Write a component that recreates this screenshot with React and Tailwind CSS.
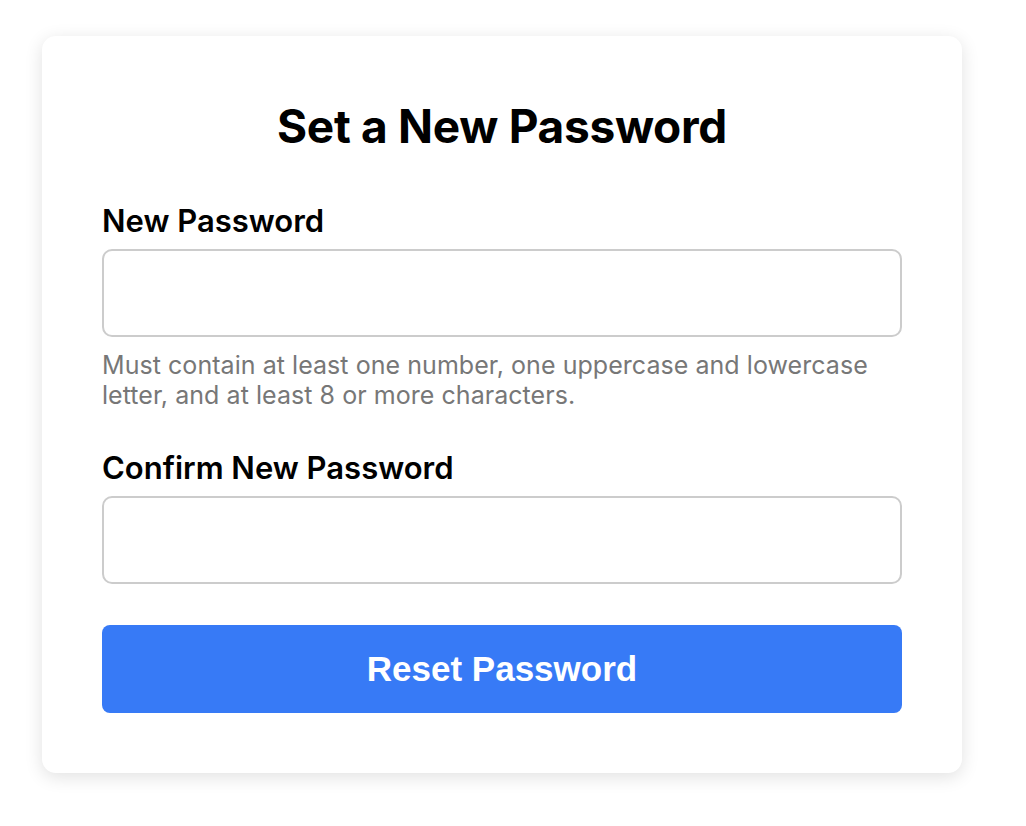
export default function App() {
  return (
    <div className="min-h-screen w-full bg-white pt-[36px] pl-[42px]" style={{ fontFamily: 'Inter, "Noto Sans", sans-serif' }}>
      <div className="w-[920px] rounded-[14px] bg-white px-[60px] pt-[60px] pb-[60px] shadow-[0_4px_18px_rgba(0,0,0,0.12)]">
        <h1 className="text-center text-[46px] font-bold leading-[60px] tracking-[-0.3px] text-black">Set a New Password</h1>
        <div className="mt-[45px]">
          <label className="block text-[31px] font-semibold leading-[40px] text-black">New Password</label>
          <input type="password" className="mt-[8px] block h-[88px] w-full rounded-[10px] border-2 border-[#cccccc] bg-white outline-none" />
          <p className="mt-[13px] text-[25px] leading-[30px] tracking-[0.05px] text-[#777777]">
            Must contain at least one number, one uppercase and lowercase letter, and at least 8 or more characters.
          </p>
        </div>
        <div className="mt-[38px]">
          <label className="block text-[31px] font-semibold leading-[40px] text-black">Confirm New Password</label>
          <input type="password" className="mt-[8px] block h-[88px] w-full rounded-[10px] border-2 border-[#cccccc] bg-white outline-none" />
        </div>
        <button className="mt-[41px] flex h-[88px] w-full items-center justify-center rounded-[8px] bg-[#377af6] text-[35px] font-bold text-white" style={{ fontFamily: '"Liberation Sans", Arial, sans-serif' }}>
          Reset Password
        </button>
      </div>
    </div>
  );
}
